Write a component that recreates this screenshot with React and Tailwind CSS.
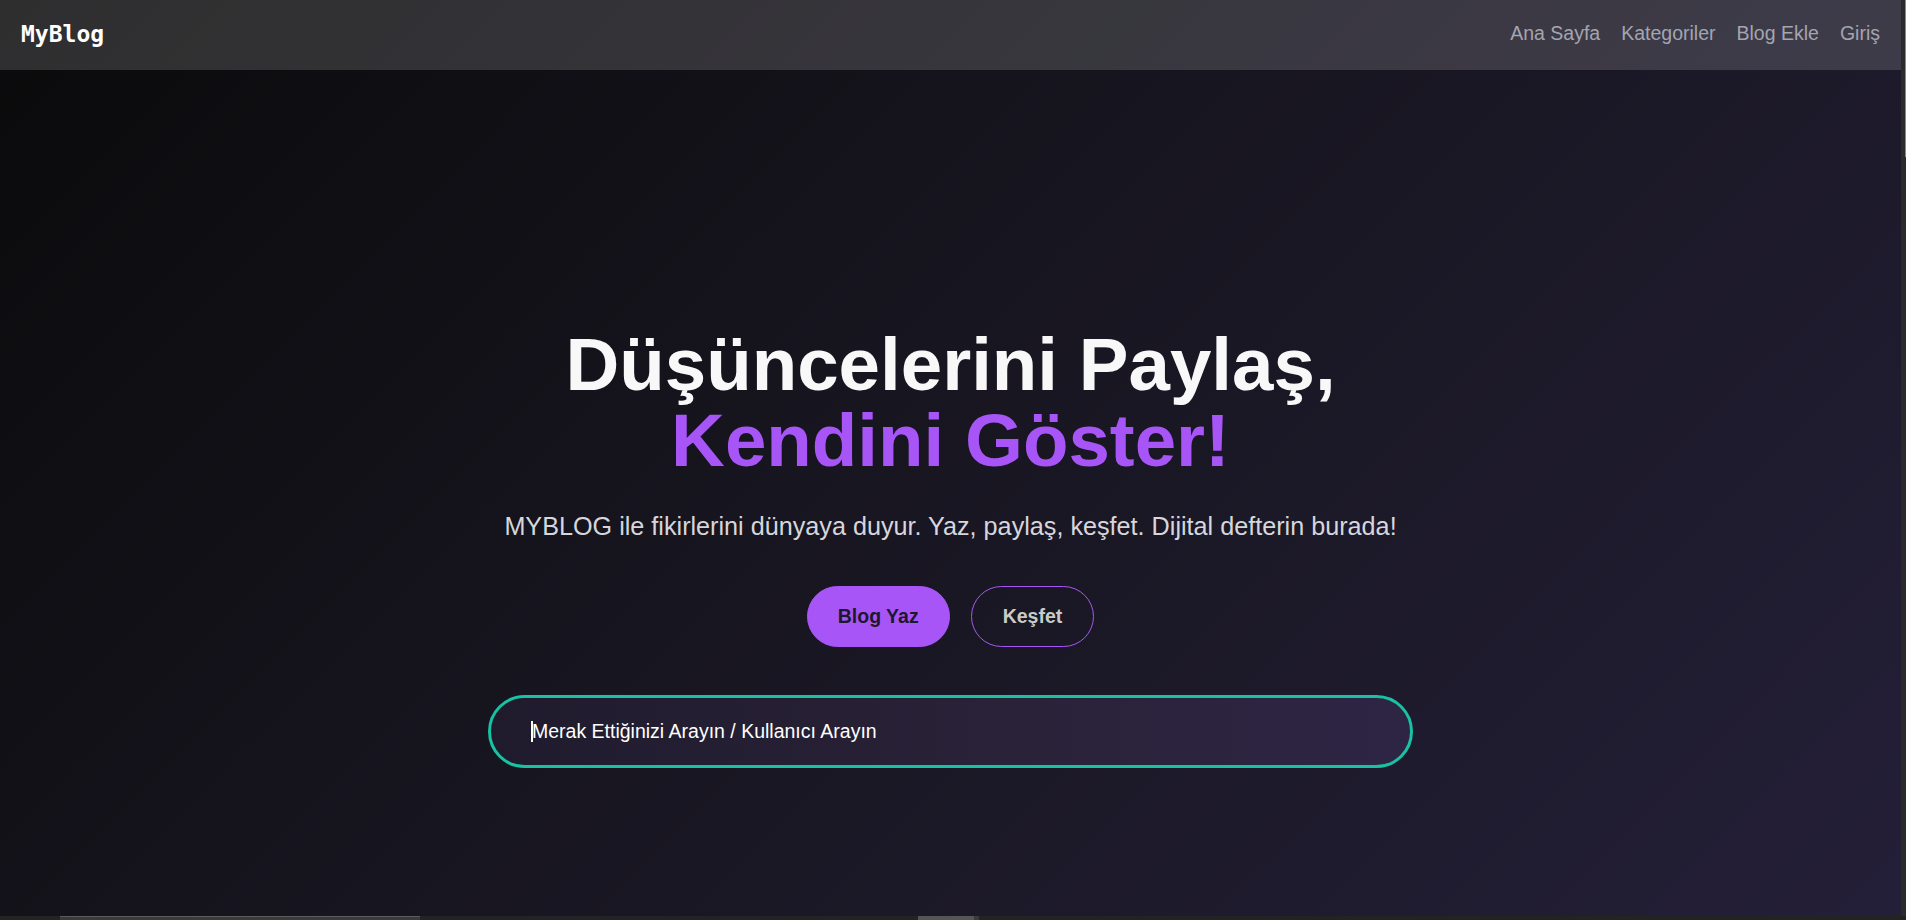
import React from 'react';

const links = ['Ana Sayfa', 'Kategoriler', 'Blog Ekle', 'Giriş'];

export default function App() {
  return (
    <div className="h-[920px] w-full flex flex-col overflow-hidden bg-[#232323] font-['Liberation_Sans',Arial,sans-serif]">
      <div className="flex flex-1 min-h-0">
        <div className="flex-1 flex flex-col bg-[linear-gradient(135deg,#0a0a0b_0%,#17151f_45%,#241f38_100%)]">
          {/* Navbar */}
          <nav className="h-[70px] shrink-0 bg-white/15 flex items-center justify-between px-[21px]">
            <a className="text-white font-bold text-[23px] font-['DejaVu_Sans_Mono',monospace] -mt-[2px]">
              MyBlog
            </a>
            <ul className="flex items-center gap-[21px] -mt-[2px]">
              {links.map((l) => (
                <li key={l} className="text-[19.5px] text-[#a3a5b0]">
                  {l}
                </li>
              ))}
            </ul>
          </nav>

          {/* Hero */}
          <main className="flex-1 flex flex-col items-center pt-[257px]">
            <h1 className="text-center font-bold text-[74.5px] leading-[75.5px]">
              <span className="block text-[#f8f8f8]">Düşüncelerini Paylaş,</span>
              <span className="block text-[#a855f7]">Kendini Göster!</span>
            </h1>
            <p className="mt-[30px] text-[25.2px] leading-[37px] text-[#d6d6dc]">
              MYBLOG ile fikirlerini dünyaya duyur. Yaz, paylaş, keşfet. Dijital defterin burada!
            </p>
            <div className="mt-[41px] flex gap-[21px]">
              <button className="h-[61px] px-[30px] rounded-full bg-[#a855f7] border border-[#a855f7] text-[#1c1830] font-bold text-[19.5px]">
                Blog Yaz
              </button>
              <button className="h-[61px] px-[31px] rounded-full border border-[#a855f7] text-[#c9cbc9] font-bold text-[19.5px]">
                Keşfet
              </button>
            </div>
            <div className="relative mt-[48px] w-[925px]">
              <input
                type="text"
                placeholder="Merak Ettiğinizi Arayın / Kullanıcı Arayın"
                className="w-full h-[73px] rounded-full border-[3px] border-[#17c3a2] bg-[linear-gradient(90deg,#1f1b2d,#2a2238_55%,#2e2545)] pl-[41px] pr-6 text-[19.5px] text-white placeholder:text-white outline-none"
              />
              <span className="absolute left-[43px] top-[26px] w-[2px] h-[21px] bg-white" />
            </div>
          </main>
        </div>

        {/* scrollbar strip */}
        <div className="w-[5px] bg-[#2b2b2b] flex justify-end">
          <div className="w-[1px] h-[157px] bg-[#8a8a8a]" />
        </div>
      </div>

      {/* bottom strip */}
      <div className="h-[4px] shrink-0 flex bg-[#232323]">
        <div className="w-[60px]" />
        <div className="w-[360px] border-t border-[#5c5c5c] bg-[#3a3a3a]" />
        <div className="w-[498px]" />
        <div className="w-[56px] bg-[#555555]" />
        <div className="w-[5px] bg-[#3a3a3a]" />
      </div>
    </div>
  );
}
